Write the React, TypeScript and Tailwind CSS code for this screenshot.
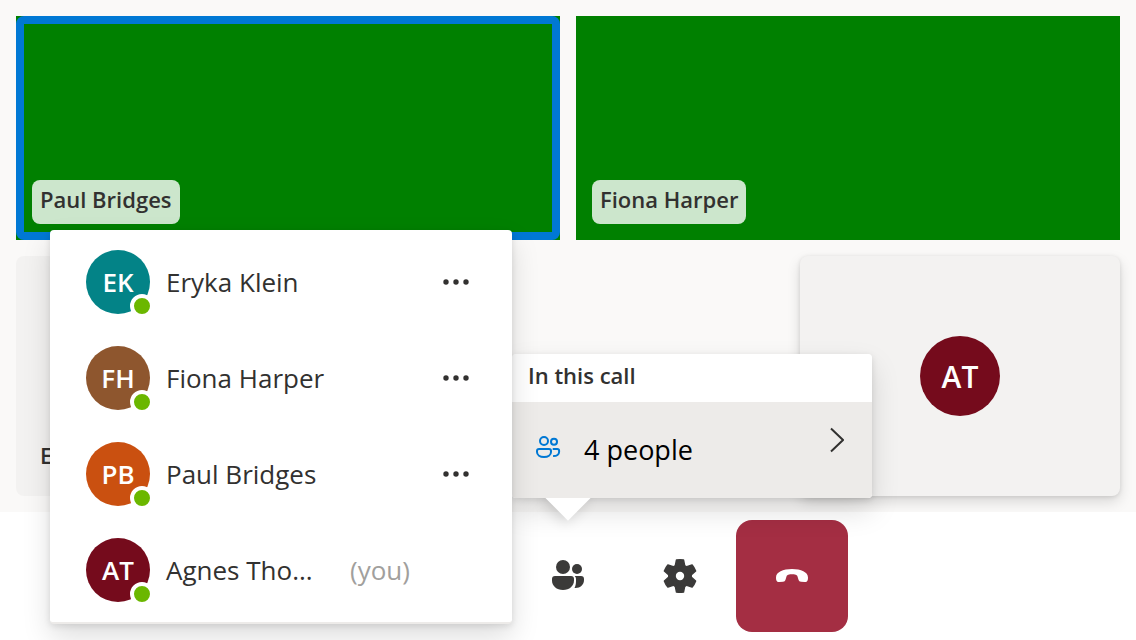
import React from "react";

type Person = { initials: string; name: string; color: string; you?: boolean };

const people: Person[] = [
  { initials: "EK", name: "Eryka Klein", color: "bg-[#038387]" },
  { initials: "FH", name: "Fiona Harper", color: "bg-[#8e562e]" },
  { initials: "PB", name: "Paul Bridges", color: "bg-[#ca5010]" },
  { initials: "AT", name: "Agnes Tho...", color: "bg-[#750b1c]", you: true },
];

function PeopleFilled() {
  return (
    <svg viewBox="0 0 40 40" className="size-10" fill="currentColor" aria-hidden="true">
      <circle cx="15" cy="11" r="7" />
      <circle cx="29" cy="13" r="5" />
      <path d="M7 20h16a3 3 0 0 1 3 3v1.500c0 5.300-4.500 9.500-11 9.500S4 29.800 4 24.500V23a3 3 0 0 1 3-3z" />
      <path d="M26.700 20H33a3 3 0 0 1 3 3v1c0 4.700-3.600 8-8.500 8h-1c1-1.900 1.500-4.200 1.500-7v-2c0-1.200-.5-2.200-1.300-3z" />
    </svg>
  );
}

function PeopleOutline() {
  return (
    <svg viewBox="0 0 28 28" className="size-7" fill="none" stroke="currentColor" strokeWidth="2" aria-hidden="true">
      <circle cx="10" cy="7" r="4" />
      <circle cx="20" cy="7.700" r="3" />
      <path d="M5 15h10a2 2 0 0 1 2 2v1c0 3-3 5-7 5s-7-2-7-5v-1a2 2 0 0 1 2-2z" />
      <path d="M18.700 15h4.600a1.800 1.800 0 0 1 1.800 1.800v1c0 2.800-2.200 4.300-6 4.200" />
    </svg>
  );
}

function Gear() {
  return (
    <svg viewBox="-20 -20 40 40" className="size-10" fill="currentColor" aria-hidden="true">
      <circle r="12" />
      {[0, 60, 120, 180, 240, 300].map((angle) => (
        <path
          key={angle}
          d="M-3.500 -16Q0 -16.600 3.500 -16L4.600 -10.500L0 -8L-4.600 -10.500Z"
          stroke="currentColor"
          strokeWidth="1.500"
          strokeLinejoin="round"
          transform={`rotate(${angle})`}
        />
      ))}
      <circle r="4.200" fill="#fff" />
    </svg>
  );
}

function HangUp() {
  return (
    <svg viewBox="0 0 40 40" className="size-10" fill="currentColor" aria-hidden="true">
      <path d="M4 21.500C4 16 11 13 20 13s16 3 16 8.500c0 1.500-.2 2.500-.6 3.300-.5 1-1.400 1.400-2.900 1.200l-3.500-.2c-1.400-.1-2.100-.8-2.500-2l-1-3.300c-.3-.9-.8-1.400-1.800-1.700-2.400-.6-5-.6-7.400 0-1 .3-1.500.8-1.800 1.700l-1 3.300c-.4 1.200-1.100 1.900-2.500 2l-3.500.2c-1.500.2-2.400-.2-2.900-1.200-.4-.8-.6-1.800-.6-3.300z" />
    </svg>
  );
}

function NameTag({ children, plain }: { children: React.ReactNode; plain?: boolean }) {
  return (
    <span
      className={
        "h-11 rounded-lg px-2 text-[22px] leading-[38px] font-semibold whitespace-nowrap text-[#323130] " +
        (plain ? "" : "bg-white/80")
      }
    >
      {children}
    </span>
  );
}

function VideoTile({ name, speaking }: { name: string; speaking?: boolean }) {
  return (
    <article className="relative flex h-56 items-end bg-[#008000] p-4">
      {speaking && <div className="absolute inset-0 rounded-lg border-8 border-[#0078d4]" />}
      <div className="relative flex">
        <NameTag>{name}</NameTag>
      </div>
    </article>
  );
}

function PersonRow({ person }: { person: Person }) {
  return (
    <li className="flex h-24 items-center pr-8 pl-9">
      <div
        className={
          "relative flex size-16 shrink-0 items-center justify-center rounded-full text-[26px] font-semibold text-white " +
          person.color
        }
      >
        {person.initials}
        <span className="absolute -right-1 -bottom-1 size-6 rounded-full border-4 border-white bg-[#6bb700]" />
      </div>
      <span className={"ml-4 text-[26px] whitespace-nowrap text-[#323130] " + (person.you ? "w-[156px]" : "flex-1")}>
        {person.name}
      </span>
      {person.you ? (
        <span className="ml-7 text-[26px] text-[#a19f9d]">(you)</span>
      ) : (
        <button type="button" aria-label={"More options for " + person.name} className="flex size-12 items-center justify-center text-[#323130]">
          <svg viewBox="0 0 28 28" className="size-7" fill="currentColor" aria-hidden="true">
            <circle cx="4" cy="14" r="2.700" />
            <circle cx="14" cy="14" r="2.700" />
            <circle cx="24" cy="14" r="2.700" />
          </svg>
        </button>
      )}
    </li>
  );
}

const menuShadow = "shadow-[0_13px_29px_rgba(0,0,0,0.132),0_2px_7px_rgba(0,0,0,0.108)]";

function PeopleMenu() {
  return (
    <div className="absolute bottom-full left-0 mb-[22px] w-[360px]">
      <div className={"relative rounded " + menuShadow}>
        <div className="absolute -bottom-4 left-10 size-8 rotate-45 bg-white shadow-[0_4px_14px_rgba(0,0,0,0.14)]" />
        <div className="relative overflow-hidden rounded bg-white">
          <h2 className="h-12 px-4 text-[22px] leading-[42px] font-semibold text-[#323130]">In this call</h2>
          <button type="button" className="flex h-24 w-full items-center bg-[#edebe9] pr-7 pl-[22px] text-left">
            <span className="mb-1 text-[#0078d4]">
              <PeopleOutline />
            </span>
            <span className="ml-[22px] flex-1 text-[27px] text-black">4 people</span>
            <svg viewBox="0 0 16 28" className="mb-5 h-7 w-4 text-[#323130]" fill="none" stroke="currentColor" strokeWidth="2" aria-hidden="true">
              <path d="M3 2.500L15 14L3 25.500" />
            </svg>
          </button>
        </div>
      </div>
      <ul
        className={
          "absolute -top-[124px] right-full w-[462px] rounded border-b-2 border-[#edebe9] bg-white py-1 " + menuShadow
        }
      >
        {people.map((person) => (
          <PersonRow key={person.initials} person={person} />
        ))}
      </ul>
    </div>
  );
}

export default function App() {
  return (
    <div className="flex min-h-screen flex-col bg-[#faf9f8] font-['Open_Sans','Noto_Sans',sans-serif]">
      <main className="flex flex-1 flex-col gap-4 p-4">
        <section className="grid grid-cols-2 gap-4">
          <VideoTile name="Paul Bridges" speaking />
          <VideoTile name="Fiona Harper" />
        </section>
        <section className="flex h-60 justify-between">
          <article className="flex w-80 items-end rounded-lg bg-[#f3f2f1] p-4">
            <NameTag plain>Eryka Klein</NameTag>
          </article>
          <article className="flex w-80 items-center justify-center rounded-lg bg-[#f3f2f1] shadow-[0_6px_14px_rgba(0,0,0,0.132),0_1px_4px_rgba(0,0,0,0.108)]">
            <div className="flex size-20 items-center justify-center rounded-full bg-[#750b1c] text-[30px] font-semibold text-white">
              AT
            </div>
          </article>
        </section>
      </main>
      <footer className="relative flex h-32 justify-center bg-white py-2 text-[#3b3a39]">
        <div className="flex pl-56">
          <div className="relative">
            <button type="button" aria-label="People" className="flex size-28 items-center justify-center">
              <PeopleFilled />
            </button>
            <PeopleMenu />
          </div>
          <button type="button" aria-label="Settings" className="flex size-28 items-center justify-center">
            <Gear />
          </button>
          <button type="button" aria-label="Leave call" className="flex size-28 items-center justify-center rounded-2xl bg-[#a42e43] text-white">
            <HangUp />
          </button>
        </div>
      </footer>
    </div>
  );
}
